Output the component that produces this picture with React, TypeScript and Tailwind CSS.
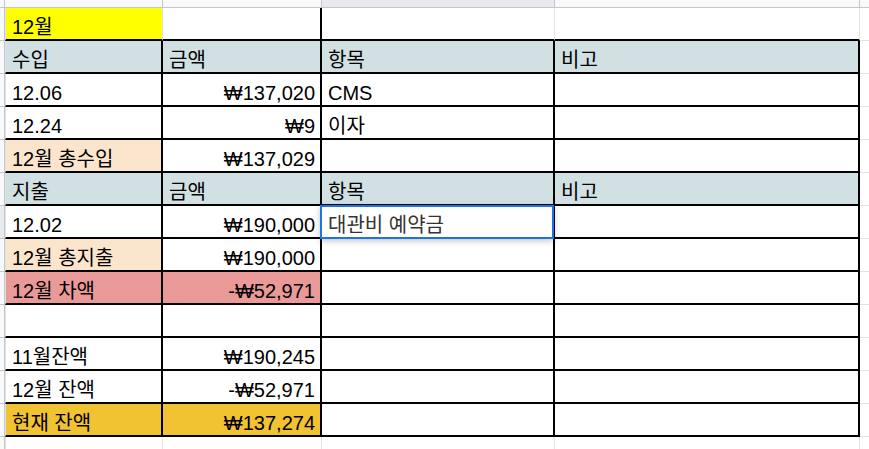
const rows = [
  { a: "수입", b: "금액", c: "항목", d: "비고", head: true },
  { a: "12.06", b: "₩137,020", c: "CMS" },
  { a: "12.24", b: "₩9", c: "이자" },
  { a: "12월 총수입", b: "₩137,029", aBg: "bg-[#fce5cd]" },
  { a: "지출", b: "금액", c: "항목", d: "비고", head: true },
  { a: "12.02", b: "₩190,000", c: "대관비 예약금", selected: true },
  { a: "12월 총지출", b: "₩190,000", aBg: "bg-[#fce5cd]" },
  { a: "12월 차액", b: "-₩52,971", aBg: "bg-[#ea9999]", bBg: "bg-[#ea9999]" },
  { a: "" },
  { a: "11월잔액", b: "₩190,245" },
  { a: "12월 잔액", b: "-₩52,971" },
  { a: "현재 잔액", b: "₩137,274", aBg: "bg-[#f1c232]", bBg: "bg-[#f1c232]" },
];

type Row = {
  a?: string;
  b?: string;
  c?: string;
  d?: string;
  head?: boolean;
  selected?: boolean;
  aBg?: string;
  bBg?: string;
};

function Gutter({ active }: { active?: boolean }) {
  return (
    <div
      className={`w-[5px] shrink-0 border-r border-b border-[#c4c7c5] ${
        active ? "bg-[#e8eaed]" : "bg-[#f8f9fa]"
      }`}
    />
  );
}

function SheetRow({ row }: { row: Row }) {
  const head = row.head ? "bg-[#d0e0e3]" : "";
  const cell = "flex items-end leading-[24px] border-r-2 border-b-2 border-black";
  return (
    <div className="flex h-[33px]">
      <Gutter active={row.selected} />
      <div className={`${cell} w-[158px] shrink-0 border-l border-l-[#e2e2e2] pl-[6px] ${row.aBg ?? head}`}>
        {row.a}
      </div>
      <div
        className={`${cell} w-[159px] shrink-0 ${row.head ? "pl-[6px]" : "justify-end pr-[5px]"} ${
          row.bBg ?? head
        }`}
      >
        {row.b}
      </div>
      <div className={`${cell} relative w-[233px] shrink-0 pl-[6px] ${head}`}>
        {row.selected && (
          <div className="absolute -left-[2px] -top-[1px] right-[-1px] -bottom-[2px] z-10 border-2 border-[#1a73e8] shadow-[0_2px_6px_rgba(60,64,67,0.3)]" />
        )}
        <span className={row.selected ? "relative z-20 text-[#333]" : ""}>{row.c}</span>
      </div>
      <div className={`${cell} w-[305px] shrink-0 pl-[6px] ${head}`}>{row.d}</div>
      <div className="flex-1 border-b border-[#e2e2e2]" />
    </div>
  );
}

export default function App() {
  return (
    <div className="h-[449px] w-full overflow-hidden bg-white font-['Liberation_Sans','Noto_Sans_CJK_KR',sans-serif] text-[20px] text-black">
      {/* column header strip, mostly scrolled away */}
      <div className="flex h-[8px] border-b border-[#c4c7c5] bg-[#f8f9fa]">
        <div className="w-[5px] shrink-0 border-r border-[#c4c7c5]" />
        <div className="w-[158px] shrink-0 border-r border-[#c4c7c5]" />
        <div className="w-[159px] shrink-0 border-r border-[#c4c7c5]" />
        <div className="w-[233px] shrink-0 border-r border-[#c4c7c5] bg-[#e8eaed]" />
        <div className="w-[305px] shrink-0 border-r border-[#c4c7c5]" />
        <div className="flex-1" />
      </div>

      {/* first row: month label */}
      <div className="flex h-[33px]">
        <Gutter />
        <div className="flex w-[158px] shrink-0 items-end border-l border-r border-b-2 border-l-[#e2e2e2] border-r-[#e2e2e2] border-b-black bg-[#ffff00] pl-[6px] leading-[24px]">
          12월
        </div>
        <div className="w-[159px] shrink-0 border-r-2 border-b-2 border-black" />
        <div className="w-[233px] shrink-0 border-r border-b-2 border-r-[#e2e2e2] border-b-black" />
        <div className="w-[305px] shrink-0 border-r border-b-2 border-r-[#e2e2e2] border-b-black" />
        <div className="flex-1 border-b border-[#e2e2e2]" />
      </div>

      {rows.map((row, i) => (
        <SheetRow key={i} row={row} />
      ))}

      {/* empty row below the table */}
      <div className="flex h-[33px]">
        <Gutter />
        <div className="w-[158px] shrink-0 border-l border-r border-[#e2e2e2]" />
        <div className="w-[159px] shrink-0 border-r border-[#e2e2e2]" />
        <div className="w-[233px] shrink-0 border-r border-[#e2e2e2]" />
        <div className="w-[305px] shrink-0 border-r border-[#e2e2e2]" />
        <div className="flex-1" />
      </div>
    </div>
  );
}
